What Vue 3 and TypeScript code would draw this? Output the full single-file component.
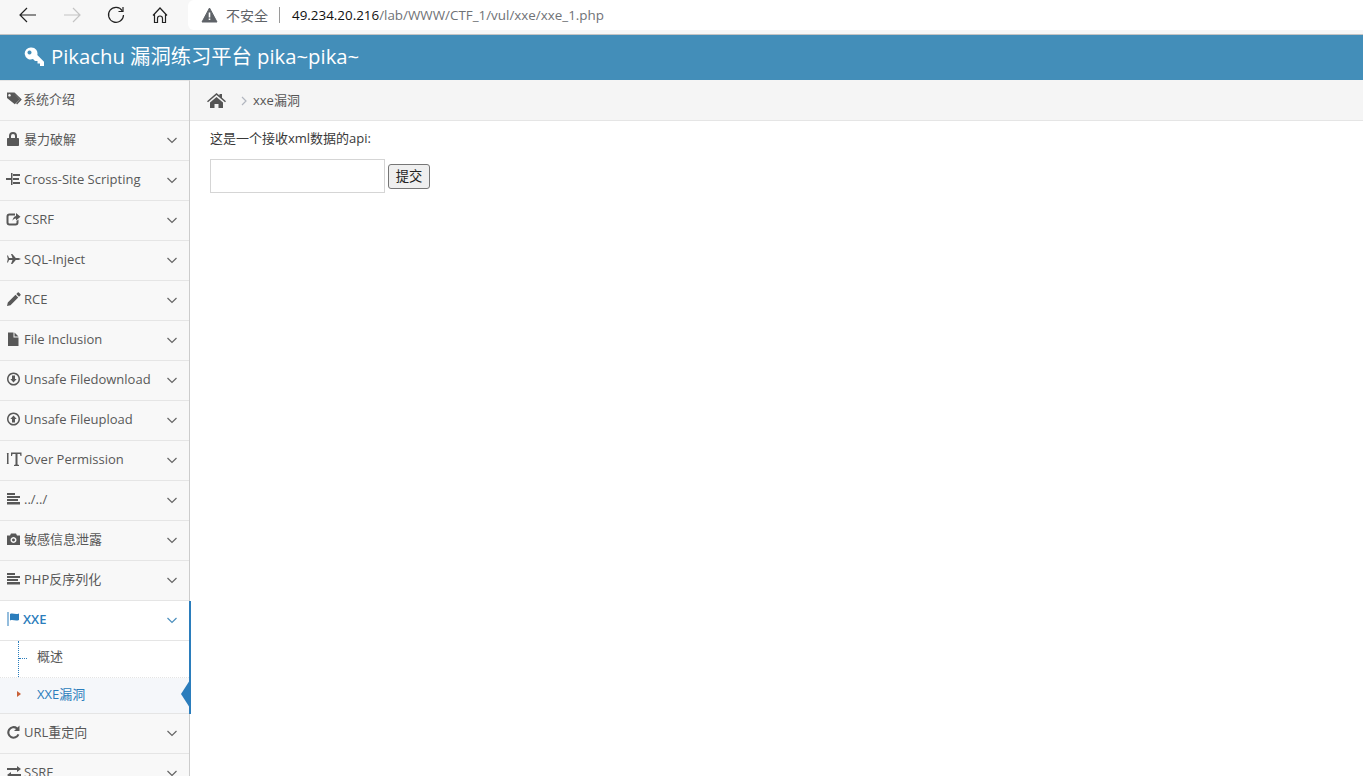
<script setup lang="ts">
interface Item { label: string; icon: string; arrow?: boolean }
const items: Item[] = [
  { label: '系统介绍', icon: 'M1 1.500h6l6.800 6.800-5 5L1 7zM3.500 3a1.300 1.300 0 1 0 .01 0zM8.500 1.500l7.300 7-4.700 4.900-1-1 3.700-3.900L7 1.500z', arrow: false },
  { label: '暴力破解', icon: 'M3 7V5a4 4 0 0 1 8 0v2h1.200a.8.8 0 0 1 .8.8V14.200a.8.8 0 0 1-.8.8H1.800a.8.8 0 0 1-.8-.8V7.800a.8.8 0 0 1 .8-.8zM5 7h4V5a2 2 0 0 0-4 0z' },
  { label: 'Cross-Site Scripting', icon: 'M0 7h5v2H0zM5 2h1.500v12H5zM7 3h7v2H7zM7 7h6v2H7zM7 11h7v2H7z' },
  { label: 'CSRF', icon: 'M3.500 2.500H9v2H3.500a1 1 0 0 0-1 1v6a1 1 0 0 0 1 1h6a1 1 0 0 0 1-1v-1.500l2-1.500v3a3 3 0 0 1-3 3h-6a3 3 0 0 1-3-3v-6a3 3 0 0 1 3-3zM10 2l4.500 3.800L10 9.500V7.500C8.200 7.500 7 8.500 6.500 10 6.500 7.500 8 5.300 10 5z' },
  { label: 'SQL-Inject', icon: 'M1 4.500h1l1 2.500h3.500L5 3h1.300l3.500 4h2.700l2.500 1-2.500 1H9.800l-3.500 4H5l1.500-4H3l-1 2.500H1L1.800 8z' },
  { label: 'RCE', icon: 'M1 15l.8-3.500L9.500 3.800l2.700 2.700-7.700 7.700zM10.300 3l1.500-1.500a.7.7 0 0 1 1 0l1.700 1.700a.7.7 0 0 1 0 1L13 5.700z' },
  { label: 'File Inclusion', icon: 'M2 1.500h5.500V6.500h5V15H2zM8.500 1.500l4 4h-4z' },
  { label: 'Unsafe Filedownload', icon: 'M7.500 1.500a6.500 6.500 0 1 0 .01 0zM7.500 3a5 5 0 1 1-.01 0zM6 4.500h3V8h1.700l-3.200 3.500L4.300 8H6z' },
  { label: 'Unsafe Fileupload', icon: 'M7.500 1.500a6.500 6.500 0 1 0 .01 0zM7.500 3a5 5 0 1 1-.01 0zM7.500 4.500L10.700 8H9v3.500H6V8H4.300z' },
  { label: 'Over Permission', icon: 'M5 1.500h10.500V5h-1L14 3h-2.500v10.500l1.500.5v1H8v-1l1.500-.5V3H6.500L6 5H5zM.5 2h2.500l-.5.5v10l.5.5H.5l.5-.5v-10z' },
  { label: '../../', icon: 'M1 2h8v2H1zM1 5h13v2H1zM1 8h11v2H1zM1 11h13v2.500H1z' },
  { label: '敏感信息泄露', icon: 'M1 4.500h3l1-2h5l1 2h3v9.500H1zM7.500 6a3 3 0 1 0 .01 0zM7.500 7.500a1.500 1.500 0 1 1-.01 0z' },
  { label: 'PHP反序列化', icon: 'M1 2h8v2H1zM1 5h13v2H1zM1 8h11v2H1zM1 11h13v2.500H1z' },
]
const after: Item[] = [
  { label: 'URL重定向', icon: 'M13.500 1.500V7h-5.500l2-2a4.200 4.200 0 1 0 1.500 5l1.900 .8A6.300 6.300 0 1 1 11.500 3.500z' },
  { label: 'SSRF', icon: 'M1 4h10V2l4 3-4 3V6H1zM15 10H5V8l-4 3 4 3v-2h10z' },
]
</script>

<template>
  <div class="page">
    <div class="browser">
      <div class="nav">
        <svg class="nb" width="24" height="24" viewBox="0 0 24 24"><path d="M20 12H4.500M11 5l-7 7 7 7" fill="none" stroke="#222" stroke-width="1.200"/></svg>
        <svg class="nb" width="24" height="24" viewBox="0 0 24 24"><path d="M4 12h15.500M13 5l7 7-7 7" fill="none" stroke="#c4c4c4" stroke-width="1.200"/></svg>
        <svg class="nb" width="24" height="24" viewBox="0 0 24 24"><path d="M18.300 7.800A7.500 7.500 0 1 0 19.500 12" fill="none" stroke="#222" stroke-width="1.200"/><path d="M19 4v4.500h-4.500" fill="none" stroke="#222" stroke-width="1.200"/></svg>
        <svg class="nb" width="24" height="24" viewBox="0 0 24 24"><path d="M6.500 11.500v8h3v-4a2.500 2.500 0 0 1 5 0v4h3v-8M5 12.500l7-7.500 7 7.500" fill="none" stroke="#222" stroke-width="1.200"/></svg>
      </div>
      <div class="url">
        <svg width="17" height="16" viewBox="0 0 17 16"><path d="M8.500 1L16 15H1z" fill="#5f6368" stroke="#5f6368" stroke-linejoin="round"/><path d="M7.700 5.500h1.600v5H7.700zM7.700 11.500h1.600v1.500H7.700z" fill="#fff"/></svg>
        <span class="insecure">不安全</span>
        <i class="sep"></i>
        <span class="addr"><b>49.234.20.216</b>/lab/WWW/CTF_1/vul/xxe/xxe_1.php</span>
      </div>
    </div>

    <header class="head">
      <svg class="key" width="22" height="22" viewBox="0 0 22 22"><path d="M7.500 1.500a6 6 0 0 1 5.800 7.500L20 15.700V20h-4v-2.500h-2.500V15H11l-2-2a6 6 0 1 1-1.500-11.500zM5.500 4.500a2 2 0 1 0 .01 0z" fill="#fff" fill-rule="evenodd"/></svg>
      <span>Pikachu 漏洞练习平台 pika~pika~</span>
    </header>

    <div class="body">
      <aside class="side">
        <a v-for="(m, i) in items" :key="m.label" class="row">
          <svg class="ic" width="16" height="16" viewBox="0 0 16 16"><path :d="m.icon" fill="#585858" fill-rule="evenodd"/></svg>
          <span class="lab" :class="{ tight: i === 0 }">{{ m.label }}</span>
          <svg v-if="m.arrow !== false" class="chev" width="12" height="12" viewBox="0 0 12 12"><path d="M1.500 4l4.500 4.500L10.500 4" fill="none" stroke="#666" stroke-width="1.200"/></svg>
        </a>

        <a class="row on">
          <svg class="ic" width="16" height="16" viewBox="0 0 16 16"><path d="M1.500 1h1v14h-1zM4 3c3-1.500 5 1 9-.5V9C9 10.500 7 8 4 9.500z" fill="#2b7dbc"/></svg>
          <span class="lab strong">XXE</span>
          <svg class="chev" width="12" height="12" viewBox="0 0 12 12"><path d="M1.500 4l4.500 4.500L10.500 4" fill="none" stroke="#4c8fbd" stroke-width="1.200"/></svg>
        </a>
        <div class="sub">
          <a class="sub-row one"><i class="dash"></i><span>概述</span></a>
          <a class="sub-row cur">
            <i class="tri"></i><span>XXE漏洞</span><i class="pin"></i>
          </a>
        </div>

        <a v-for="m in after" :key="m.label" class="row">
          <svg class="ic" width="16" height="16" viewBox="0 0 16 16"><path :d="m.icon" fill="#585858"/></svg>
          <span class="lab">{{ m.label }}</span>
          <svg class="chev" width="12" height="12" viewBox="0 0 12 12"><path d="M1.500 4l4.500 4.500L10.500 4" fill="none" stroke="#666" stroke-width="1.200"/></svg>
        </a>
      </aside>

      <main class="main">
        <div class="crumb">
          <svg class="home" width="19" height="16" viewBox="0 0 19 16"><path d="M9.500 1l3 2.600V2H15v3.800L19 9.300l-1 1-8.500-7.300L1 10.300l-1-1zM3 10.500l6.500-5.600 6.500 5.600V16h-4.500v-4h-4v4H3z" fill="#555"/></svg>
          <svg class="cs" width="6" height="10" viewBox="0 0 6 10"><path d="M1 1l4 4-4 4" fill="none" stroke="#b2b6bf" stroke-width="1.200"/></svg>
          <span>xxe漏洞</span>
        </div>
        <div class="content">
          <p>这是一个接收xml数据的api:</p>
          <form class="frm" @submit.prevent>
            <input type="text" />
            <button type="submit">提交</button>
          </form>
        </div>
      </main>
    </div>
  </div>
</template>

<style>
html, body { margin: 0; height: 100%; overflow: hidden; background: #fff; }
</style>

<style scoped>
.page { width: 1363px; height: 776px; overflow: hidden; display: flex; flex-direction: column; font-family: "Open Sans", "Noto Sans CJK SC", sans-serif; font-size: 13px; color: #393939; }
.browser { height: 35px; box-sizing: border-box; flex: none; display: flex; background: #f7f7f7; border-bottom: 1px solid #c4c4c4; }
.nav { width: 188px; display: flex; align-items: center; padding-bottom: 4px; flex: none; box-sizing: border-box; padding-left: 16px; gap: 20px; }
.nb { flex: none; }
.url { flex: 1; height: 30px; background: #fff; border-radius: 6px 0 0 6px; display: flex; align-items: center; padding-left: 13px; font-size: 13.400px; }
.insecure { color: #5f6368; margin-left: 8px; font-size: 14px; }
.sep { width: 1px; height: 16px; background: #9a9a9a; margin: 0 12px 0 11px; }
.addr { color: #6f7276; }
.addr b { font-weight: 400; color: #111; }
.head { height: 45px; box-sizing: border-box; flex: none; background: #438eb9; color: #fff; display: flex; align-items: center; padding: 0 0 5px 24px; gap: 5px; font-size: 20.300px; }
.key { margin-top: 3px; }
.body { flex: 1; display: flex; min-height: 0; }
.side { width: 189px; flex: none; background: #f8f8f8; border-right: 1px solid #ccc; border-top: 1px solid #e5e5e5; }
.row { height: 40px; box-sizing: border-box; border-bottom: 1px solid #e5e5e5; display: flex; align-items: center; padding: 0 0 4px 6px; color: #585858; position: relative; }
.ic { flex: none; margin-right: 2px; }
.lab { flex: 1; white-space: nowrap; }
.tight { margin-left: -1px; }
.chev { position: absolute; right: 11px; top: 13px; }
.row.on { background: #fff; color: #2b7dbc; }
.strong { font-weight: 600; margin-left: -1px; }
.sub { background: #fff; border-bottom: 1px solid #e5e5e5; position: relative; }
.sub::before { content: ""; position: absolute; left: 18px; top: 0; bottom: 0; border-left: 1px dotted #2b7dbc; }
.sub-row { display: flex; align-items: center; padding-left: 37px; position: relative; box-sizing: border-box; }
.one { height: 37px; border-bottom: 1px dotted #e4e4e4; color: #585858; padding-bottom: 7px; }
.cur { height: 35px; background: #f5f7fa; color: #2b7dbc; padding-bottom: 4px; }
.dash { position: absolute; left: 19px; top: 17px; width: 8px; border-top: 1px dotted #2b7dbc; }
.tri { position: absolute; left: 17px; top: 13px; border-left: 4px solid #c86139; border-top: 3.500px solid transparent; border-bottom: 3.500px solid transparent; }
.pin { position: absolute; right: -1px; top: 2px; width: 0; height: 0; border-right: 9px solid #2b7dbc; border-top: 14px solid transparent; border-bottom: 14px solid transparent; }
.side .on, .sub { box-shadow: 2px 0 0 #2b7dbc; z-index: 1; }
.main { flex: 1; min-width: 0; }
.crumb { height: 41px; box-sizing: border-box; background: #f5f5f5; border-bottom: 1px solid #e5e5e5; display: flex; align-items: center; padding: 0 0 2px 17px; color: #555; }
.home { margin-top: 2px; }
.cs { margin: 4px 6px 0 15px; }
.content { padding: 9px 20px 0; }
.content p { margin: 0 0 12px; line-height: 17px; color: #393939; }
.frm { display: flex; align-items: center; gap: 3px; }
input { width: 175px; height: 34px; box-sizing: border-box; border: 1px solid #d5d5d5; padding: 0; background: #fff; margin: 0; }
button { width: 42px; height: 25px; box-sizing: border-box; padding: 0 0 2px; margin: 0; border: 1px solid #767676; border-radius: 3px; background: #efefef; color: #222; font: inherit; font-size: 13.300px; }
</style>
